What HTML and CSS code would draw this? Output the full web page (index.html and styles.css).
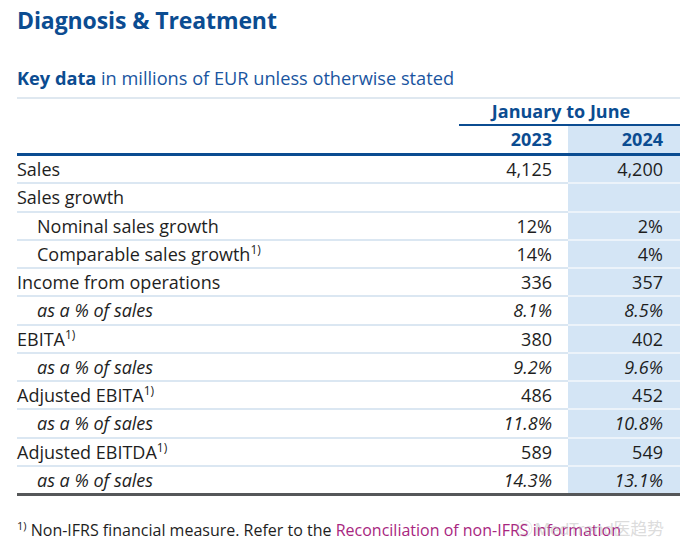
FILE: index.html
```html
<!DOCTYPE html>
<html lang="en">
<head>
<meta charset="utf-8">
<title>Diagnosis &amp; Treatment</title>
<link rel="stylesheet" href="styles.css">
</head>
<body>
<main class="page">
  <h1 class="title">Diagnosis &amp; Treatment</h1>
  <p class="subtitle"><b>Key data</b> in millions of EUR unless otherwise stated</p>
  <table class="data">
    <colgroup>
      <col class="c-label">
      <col class="c-prev">
      <col class="c-cur">
    </colgroup>
    <thead>
      <tr class="period">
        <th class="blank"></th>
        <th colspan="2" class="period-cell">January to June</th>
      </tr>
      <tr class="years">
        <th class="blank"></th>
        <th class="num">2023</th>
        <th class="num cur">2024</th>
      </tr>
    </thead>
    <tbody>
      <tr><td>Sales</td><td class="num">4,125</td><td class="num cur">4,200</td></tr>
      <tr><td>Sales growth</td><td class="num"></td><td class="num cur"></td></tr>
      <tr><td class="ind">Nominal sales growth</td><td class="num">12%</td><td class="num cur">2%</td></tr>
      <tr><td class="ind">Comparable sales growth<sup>1)</sup></td><td class="num">14%</td><td class="num cur">4%</td></tr>
      <tr><td>Income from operations</td><td class="num">336</td><td class="num cur">357</td></tr>
      <tr class="pct"><td class="ind">as a % of sales</td><td class="num">8.1%</td><td class="num cur">8.5%</td></tr>
      <tr><td>EBITA<sup>1)</sup></td><td class="num">380</td><td class="num cur">402</td></tr>
      <tr class="pct"><td class="ind">as a % of sales</td><td class="num">9.2%</td><td class="num cur">9.6%</td></tr>
      <tr><td>Adjusted EBITA<sup>1)</sup></td><td class="num">486</td><td class="num cur">452</td></tr>
      <tr class="pct"><td class="ind">as a % of sales</td><td class="num">11.8%</td><td class="num cur">10.8%</td></tr>
      <tr><td>Adjusted EBITDA<sup>1)</sup></td><td class="num">589</td><td class="num cur">549</td></tr>
      <tr class="pct last"><td class="ind">as a % of sales</td><td class="num">14.3%</td><td class="num cur">13.1%</td></tr>
    </tbody>
  </table>
  <p class="note"><sup>1)</sup> Non-IFRS financial measure. Refer to the <span class="link">Reconciliation of non-IFRS information</span></p>
  <div class="watermark"><span class="wb">◎</span>MedTrend医趋势</div>
</main>
</body>
</html>
```

FILE: styles.css
```css
html, body {
  margin: 0;
  padding: 0;
  background: #ffffff;
}

body {
  font-family: "Open Sans", "Noto Sans", "Noto Sans CJK SC", sans-serif;
  color: #1e1e1e;
}

.page {
  position: relative;
  width: 663px;
  padding: 0 0 0 17px;
  height: 547px;
  overflow: hidden;
}

.title {
  margin: 0;
  padding-top: 4px;
  font-size: 23px;
  line-height: 32px;
  font-weight: 700;
  color: #0b4c91;
  letter-spacing: -0.1px;
}

.subtitle {
  margin: 0;
  padding-top: 28px;
  font-size: 18.2px;
  line-height: 28px;
  color: #1a55a0;
  height: 33px;
}

.subtitle b {
  color: #0b4c91;
  font-weight: 700;
}

.data {
  width: 663px;
  border-collapse: collapse;
  table-layout: fixed;
  border-top: 2px solid #dfe8f0;
  font-size: 18px;
}

.c-label { width: 442px; }
.c-prev { width: 109px; }
.c-cur { width: 112px; }

.data th,
.data td {
  padding: 0;
}

.period th {
  height: 25px;
  line-height: 25px;
}

.period-cell {
  text-align: center;
  padding-right: 17px !important;
  color: #0b4c91;
  font-weight: 700;
  border-bottom: 2px solid #0b4c91;
  vertical-align: bottom;
}

.years th {
  height: 27px;
  line-height: 27px;
  color: #0b4c91;
  font-weight: 700;
  border-bottom: 3px solid #0b4c91;
}

.num {
  text-align: right;
  padding-right: 16px !important;
}

.data .cur {
  background: #d4e5f5;
  padding-right: 17px !important;
}

.data tbody td {
  height: 26.25px;
  line-height: 26.25px;
  border-bottom: 2px solid #dbe7f2;
  white-space: nowrap;
}

.data tbody td.cur {
  border-bottom-color: #ecf3fa;
}

.data tbody tr.last td {
  border-bottom: 3px solid #555759;
}

.ind {
  padding-left: 20px !important;
}

.pct td {
  font-style: italic;
}

sup {
  font-size: 12px;
  line-height: 0;
  vertical-align: 7px;
}

.note {
  margin: 0;
  padding-top: 22px;
  font-size: 16px;
  line-height: 24px;
  color: #1e1e1e;
}

.note sup {
  font-size: 11px;
  vertical-align: 6px;
}

.link {
  color: #a8267f;
}

.watermark {
  position: absolute;
  left: 516px;
  top: 517px;
  font-size: 17px;
  line-height: 24px;
  color: rgba(190, 190, 190, 0.55);
  font-family: "Noto Sans", "Noto Sans CJK SC", sans-serif;
  white-space: nowrap;
  letter-spacing: -0.3px;
}

.wb {
  margin-right: 2px;
}
```
